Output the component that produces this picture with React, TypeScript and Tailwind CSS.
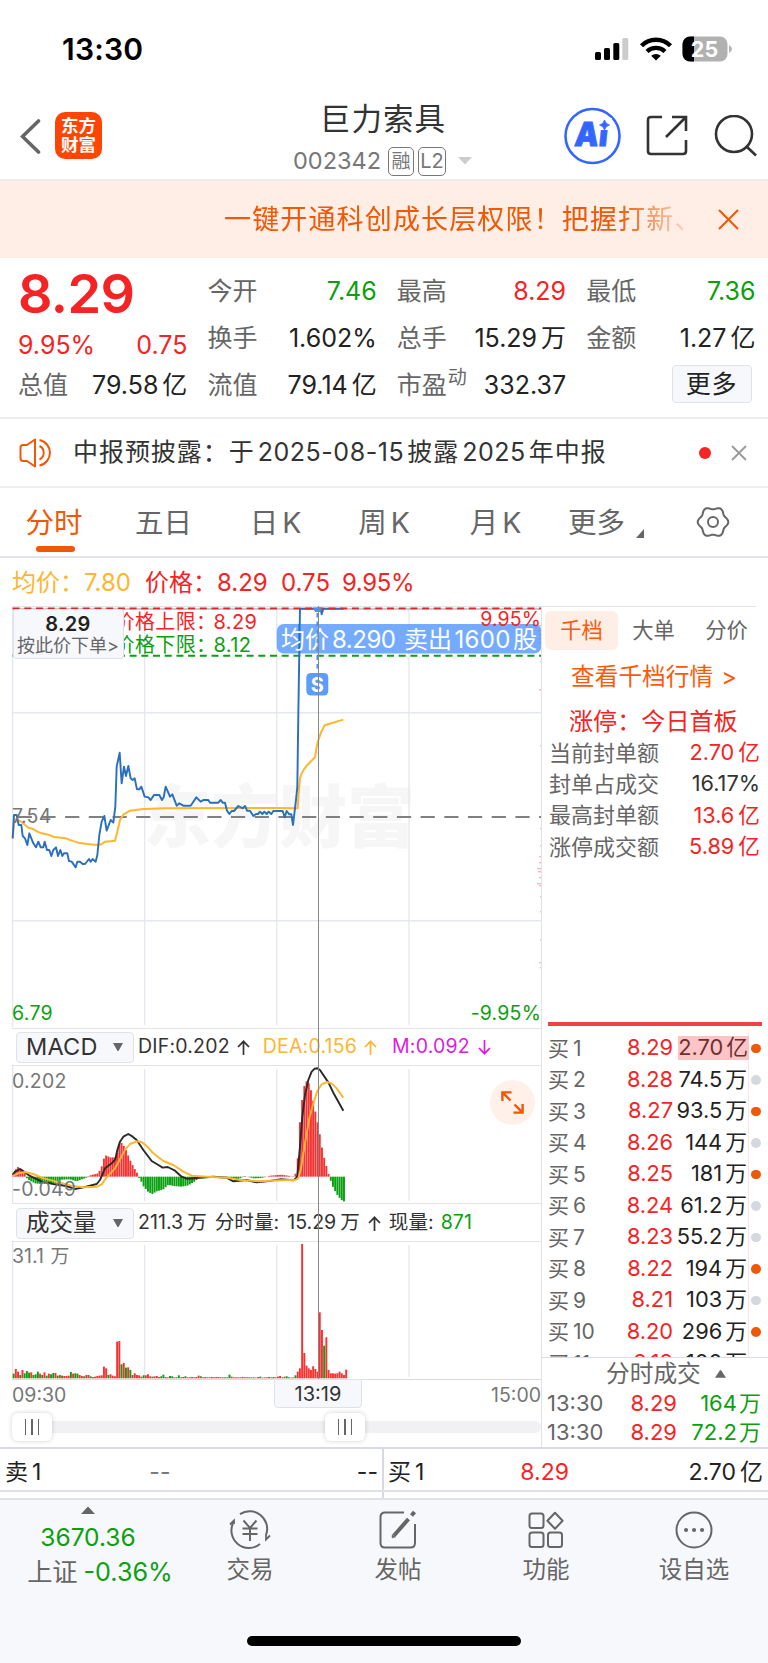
import React from "react";

const UP = "text-[#f52323]";
const DOWN = "text-[#0aa00a]";

// value followed by a chinese unit, with the small gap in between
const Amount = ({ value, unit, gap = "ml-1" }: { value: string; unit?: string; gap?: string }) => (
  <span className="whitespace-nowrap">
    {value}
    {unit && <span className={gap}>{unit}</span>}
  </span>
);

/* ---------- status bar ---------- */

const StatusBar = () => (
  <div className="flex h-[98px] items-center justify-between pl-[62px] pr-[35px]">
    <span className="text-[30px] font-semibold leading-none tracking-[0.2px] text-black">13:30</span>
    <div className="flex items-center gap-[9px]">
      <svg width="36" height="24" viewBox="0 0 36 24">
        <rect x="1" y="15" width="6" height="8" rx="1.6" />
        <rect x="10" y="11" width="6" height="12" rx="1.6" />
        <rect x="19.3" y="6" width="6" height="17" rx="1.6" />
        <rect x="28.3" y="1" width="6" height="22" rx="1.6" fill="#ccc" />
      </svg>
      <svg width="34" height="24" viewBox="0 0 34 24">
        <path d="M2.5 8.8 A 20.5 20.5 0 0 1 31.5 8.8" fill="none" stroke="#000" strokeWidth="4.4" />
        <path d="M8 14.5 A 13 13 0 0 1 26 14.5" fill="none" stroke="#000" strokeWidth="4.2" />
        <path d="M17 23.5 L12.2 18.8 A 7 7 0 0 1 21.8 18.8 Z" />
      </svg>
      <svg width="51" height="26" viewBox="0 0 51 26">
        <defs>
          <clipPath id="battery">
            <rect x="0.5" y="0.5" width="45" height="25" rx="7.5" />
          </clipPath>
        </defs>
        <g clipPath="url(#battery)">
          <rect width="46" height="26" fill="#b1b1b1" />
          <rect width="12" height="26" />
        </g>
        <path d="M47 9 Q50 11 50 13 Q50 15 47 17 Z" fill="#b1b1b1" />
        <text x="22.5" y="20.5" textAnchor="middle" fontSize="21.5" fontWeight="700" fill="#fff">
          25
        </text>
      </svg>
    </div>
  </div>
);

/* ---------- header ---------- */

const Header = () => (
  <div className="relative flex h-[83px] items-start justify-between border-b-2 border-[#ececec] pl-[20px] pr-[10px]">
    <div className="flex items-center gap-[13px] pt-[14px]">
      <svg width="22" height="36" viewBox="0 0 22 36" fill="none" stroke="#666" strokeWidth="3.6">
        <path d="M18.5 3 L2.5 18.5 L18.5 34" strokeLinecap="round" />
      </svg>
      <div className="flex h-[47px] w-[47px] flex-col items-center justify-center rounded-[10px] bg-[#ff4503] text-[17.5px] font-bold leading-[18.5px] text-white">
        <span>东方</span>
        <span>财富</span>
      </div>
    </div>

    <div className="absolute left-[283px] flex w-[200px] flex-col items-center">
      <div className="-mt-px h-[45px] text-[30.5px] leading-[44px] tracking-[1.1px] text-[#333]">巨力索具</div>
      <div className="mt-[1px] flex h-[36px] w-[180px] items-center text-[#777]">
        <span className="w-[95px] text-[23.5px] leading-none">002342</span>
        <span className="flex h-[29px] w-[26px] shrink-0 items-center justify-center rounded-[5px] border-[1.5px] border-[#777] text-[19px] leading-none">
          融
        </span>
        <span className="ml-1 flex h-[29px] w-[28px] shrink-0 items-center justify-center rounded-[5px] border-[1.5px] border-[#777] text-[20px] leading-none">
          L2
        </span>
        <svg className="ml-3 shrink-0" width="14" height="8" viewBox="0 0 14 8">
          <path d="M0 0 H14 L7 7.5 Z" fill="#ccc" />
        </svg>
      </div>
    </div>

    <div className="flex items-center pt-[9px]">
      <svg width="58" height="58" viewBox="0 0 58 58">
        <circle cx="29.5" cy="29" r="27" fill="none" stroke="#3366ff" strokeWidth="2.6" />
        <text
          x="11"
          y="39.5"
          fontSize="33"
          fontWeight="900"
          fill="#3366ff"
          stroke="#3366ff"
          strokeWidth="0.8"
          transform="skewX(-6) translate(4 0)"
          textLength="33"
          lengthAdjust="spacingAndGlyphs"
        >
          Ai
        </text>
        <rect x="35" y="11" width="14" height="12" fill="#fff" />
        <path
          d="M41.5 13 Q42.5 17 46.5 18 Q42.5 19 41.5 23 Q40.5 19 36.5 18 Q40.5 17 41.5 13 Z"
          fill="#3366ff"
          stroke="#3366ff"
          strokeWidth="0.8"
        />
      </svg>
      <svg className="ml-[25px]" width="42" height="42" viewBox="0 0 42 42" fill="none" stroke="#333" strokeWidth="2.6">
        <path d="M16 2 H5 Q2 2 2 5 V36 Q2 39 5 39 H37 Q40 39 40 36 V25" />
        <path d="M26 2 H40 V16 M40 2 L20 22" />
      </svg>
      <svg className="ml-[26px]" width="44" height="42" viewBox="0 0 44 42" fill="none" stroke="#333" strokeWidth="2.6">
        <circle cx="20" cy="19" r="18" />
        <path d="M32 31 L42 40.5" />
      </svg>
    </div>
  </div>
);

const Banner = () => (
  <div className="flex h-[77px] items-center bg-[#ffeee6] pl-[224px]">
    <div className="w-[480px] shrink-0 whitespace-nowrap text-[27px] leading-[40px] tracking-[1.15px] text-[#ee5806] [mask-image:linear-gradient(to_right,#000_82%,transparent_99%)]">
      一键开通科创成长层权限！把握打新、
    </div>
    <svg className="ml-[14px] shrink-0" width="21" height="21" viewBox="0 0 21 21" stroke="#ee5806" strokeWidth="2">
      <path d="M1 1 L20 20 M20 1 L1 20" />
    </svg>
  </div>
);

/* ---------- quote ---------- */

interface Quote {
  label: string;
  value: string;
  unit?: string;
  color?: string;
}

const quotes: Quote[][] = [
  [
    { label: "今开", value: "7.46", color: DOWN },
    { label: "换手", value: "1.602%" },
    { label: "流值", value: "79.14", unit: "亿" },
  ],
  [
    { label: "最高", value: "8.29", color: UP },
    { label: "总手", value: "15.29", unit: "万" },
    { label: "市盈", value: "332.37" },
  ],
  [
    { label: "最低", value: "7.36", color: DOWN },
    { label: "金额", value: "1.27", unit: "亿" },
  ],
];

const QuoteRow = ({ label, value, unit, color }: Quote) => (
  <div className="flex h-[47px] items-center justify-between leading-none">
    <span className="relative text-[#666]">
      {label}
      {label === "市盈" && <sup className="absolute left-[51px] top-[-5px] text-[19px] leading-none">动</sup>}
    </span>
    <span className={color ?? "text-[#222]"}>
      <Amount value={value} unit={unit} />
    </span>
  </div>
);

const QuotePanel = () => (
  <div className="grid h-[161px] grid-cols-4 gap-x-5 border-b-2 border-[#eee] pl-[18px] pr-[12.5px] text-[25px]">
    <div className="flex flex-col">
      <div className="flex h-[69px] items-center pt-[3px] text-[54px] font-semibold leading-none tracking-[-0.6px] text-[#f52323]">
        8.29
      </div>
      <div className="flex h-[36px] items-center justify-between leading-none text-[#f52323]">
        <span>9.95%</span>
        <span>0.75</span>
      </div>
      <div className="flex h-[45px] items-center justify-between leading-none">
        <span className="text-[#666]">总值</span>
        <span className="text-[#222]">
          <Amount value="79.58" unit="亿" />
        </span>
      </div>
    </div>
    {quotes.map((column, i) => (
      <div key={i} className="flex flex-col pt-[10px]">
        {column.map((q) => (
          <QuoteRow key={q.label} {...q} />
        ))}
        {i === 2 && (
          <button className="mr-1 mt-[3px] flex h-[38px] w-[80px] items-center justify-center self-end rounded-[4px] border-[1.5px] border-[#dfe2e8] bg-[#f7f8fb] leading-none tracking-[0.8px] text-[#222]">
            更多
          </button>
        )}
      </div>
    ))}
  </div>
);

const Notice = () => (
  <div className="flex h-[69px] items-center border-b-2 border-[#eee] pl-[19px] pr-5">
    <svg width="34" height="30" viewBox="0 0 34 30" fill="none" stroke="#ee5806" strokeWidth="2">
      <path d="M16 1.5 L8 7 H4 Q1.5 7 1.5 10 V20 Q1.5 23 4 23 H8 L16 28.5 Z" strokeLinejoin="round" />
      <path d="M20.5 2 A 13 13 0 0 1 20.5 27.5" />
      <path d="M20.5 8 A 7.5 7.5 0 0 1 20.5 21.5" />
    </svg>
    <div className="ml-[20px] flex-1 whitespace-nowrap text-[25px] leading-none tracking-[0.95px] text-[#333]">
      中报预披露：于<span className="mx-[3px] tracking-[0.55px]">2025-08-15</span>披露
      <span className="mx-[3px] tracking-[0.55px]">2025</span>年中报
    </div>
    <span className="h-3 w-3 rounded-full bg-[#f52323]" />
    <svg className="ml-[20px] mr-px" width="16" height="16" viewBox="0 0 16 16" stroke="#999" strokeWidth="1.8">
      <path d="M1 1 L15 15 M15 1 L1 15" />
    </svg>
  </div>
);

/* ---------- period tabs ---------- */

// six-lobed outline of the settings icon
const gearPath =
  Array.from({ length: 72 }, (_, i) => {
    const a = (i * Math.PI) / 36;
    const r = 14 + 1.3 * Math.cos(6 * a);
    return `${i ? "L" : "M"}${(17 + r * Math.cos(a)).toFixed(2)} ${(17 + r * Math.sin(a)).toFixed(2)}`;
  }).join(" ") + " Z";

const PeriodTabs = () => (
  <div className="flex h-[70px] items-center border-b-2 border-[#e2e4ea] text-[28.5px] leading-none text-[#666]">
    <div className="relative flex h-full w-[110px] items-center justify-center pr-[2px] pt-[2px] text-[#ee5806]">
      分时
      <span className="absolute bottom-[4px] left-[35.5px] h-[6px] w-[39px] rounded-full bg-[#ee5806]" />
    </div>
    <div className="w-[108px] pr-px pt-[2px] text-center">五日</div>
    <div className="w-[115px] pt-[2px] text-center">
      日<span className="ml-1">K</span>
    </div>
    <div className="w-[102px] pt-[2px] text-center">
      周<span className="ml-1">K</span>
    </div>
    <div className="w-[121px] pt-[2px] text-center">
      月<span className="ml-1">K</span>
    </div>
    <div className="flex w-[110px] pl-[12px] pt-[2px]">
      更多
      <svg className="ml-[11px] mt-[20px] shrink-0" width="8" height="9" viewBox="0 0 8 9">
        <path d="M8 0 V9 H0 Z" fill="#666" />
      </svg>
    </div>
    <svg className="ml-[30px]" width="34" height="34" viewBox="0 0 34 34" fill="none" stroke="#666" strokeWidth="2">
      <path d={gearPath} />
      <circle cx="17" cy="17" r="5" />
    </svg>
  </div>
);

/* ---------- charts ---------- */

const pricePoints =
  "38,835 42,765 50,765 56,795 64,795 68,828 75,835 82,855 88,820 100,850 108,862 115,845 122,862 130,862 134,845 141,870 148,870 154,888 160,870 168,862 174,888 181,870 187,888 192,880 202,880 207,903 215,905 227,922 232,905 240,905 248,912 255,912 267,897 272,905 278,897 287,905 292,885 298,825 305,785 313,768 320,812 332,780 340,788 346,740 350,620 359,578 365,670 372,620 378,648 385,618 392,655 398,660 404,655 411,688 418,688 424,680 434,710 445,712 452,720 462,705 478,705 486,720 491,712 497,680 510,710 517,703 530,737 538,730 550,737 572,737 578,728 589,712 602,725 610,720 625,720 630,728 655,728 662,720 668,728 675,728 681,752 688,762 695,753 702,753 715,738 728,745 735,738 741,752 750,752 760,768 768,762 774,762 780,755 787,762 793,755 800,762 806,755 814,762 820,753 848,753 854,772 860,753 868,763 874,763 879,795 888,720 892,680 895,460 900,146 962,146 965,163 970,146 1030,146";

const averagePoints =
  "38,835 42,790 48,778 60,783 72,792 85,803 98,806 112,815 125,820 145,824 162,831 198,835 215,842 235,848 260,852 295,855 305,852 315,845 345,842 352,815 360,780 370,764 390,752 430,747 500,745 830,744 893,745 896,700 900,655 905,640 914,625 922,615 945,592 950,560 955,540 964,515 974,496 1030,479";

const difPoints =
  "38,555 45,545 60,537 72,545 90,558 105,565 125,575 160,582 200,588 225,597 250,592 290,582 300,570 315,535 335,520 346,508 352,480 360,455 370,440 385,432 398,440 410,450 430,480 455,513 475,525 488,533 503,531 525,542 545,560 560,566 600,563 640,560 680,563 700,574 740,570 770,577 800,574 840,568 880,571 888,565 892,558 900,470 907,380 915,315 925,270 935,245 944,236 952,235 960,240 970,255 985,277 1000,308 1030,362";

const deaPoints =
  "38,558 55,550 75,546 100,552 130,565 170,575 210,586 250,592 290,590 305,583 320,562 345,535 360,508 375,480 390,462 410,454 425,456 440,468 460,490 490,513 520,525 550,545 575,557 620,560 680,563 720,570 780,574 840,571 885,570 895,565 902,540 915,460 928,385 940,340 952,303 965,283 980,276 995,280 1010,295 1030,323";

// [x, height] anchors of the MACD histogram, interpolated minute by minute
const macdAnchors = [
  [38, 5], [52, 30], [62, 24], [76, 8], [80, -4], [90, -12], [105, -20], [125, -22], [170, -18], [185, -9],
  [210, -8], [230, -14], [245, -8], [262, -2], [267, 3], [295, 10], [305, 30], [315, 65], [330, 58], [345, 58],
  [352, 72], [360, 105], [368, 98], [378, 80], [390, 50], [400, 30], [411, 12], [415, 0], [422, -10], [430, -28],
  [445, -46], [457, -52], [470, -44], [490, -38], [505, -24], [520, -28], [545, -30], [565, -26], [585, -14],
  [600, 0], [680, -1], [700, -6], [715, -8], [735, 2], [760, -5], [785, -4], [800, 0], [810, 3], [845, 6],
  [870, 2], [885, -3], [894, 60], [900, 165], [908, 245], [915, 282], [922, 288], [928, 277], [935, 252],
  [942, 215], [949, 182], [956, 147], [962, 112], [968, 75], [975, 47], [982, 22], [988, 0], [994, -17],
  [1000, -33], [1007, -46], [1013, -56], [1020, -65], [1027, -72], [1034, -75],
];

const STEP = 6.607;

const macdBars = Array.from({ length: 151 }, (_, i) => {
  const x = 38 + i * STEP;
  const mid = x + 3;
  const n = Math.max(1, macdAnchors.findIndex(([ax]) => ax >= mid));
  const [x0, y0] = macdAnchors[n - 1];
  const [x1, y1] = macdAnchors[n];
  return { x, h: y0 + ((y1 - y0) * (mid - x0)) / (x1 - x0) };
});

// negative = falling minute (green)
const volumes = [
  -14, 28, 20, -10, 25, -15, -22, -17, 18, -10, -12, -20, 14, -10, 18, -8, 14, -12, -16, 16, -8, 10, -8, 7, 7, 8,
  -19, 14, -15, -14, 10, 7, -6, 10, 10, -6, 4, 5, 7, 8, 9, 35, 30, -10, 12, 8, 6, 110, 112, -42, 46, -32, 33, -25,
  10, 15, 10, 9, 5, -9, 9, 12, 6, -5, 6, 7, 4, -6, -11, 4, 3, -7, -6, 3, -3, -9, 3, 4, -6, 3, 3, 4, 3, 4, 8, -6,
  3, 4, 3, 3, 4, 3, 4, 4, 3, 3, -3, 3, -11, 5, 3, 3, 3, 3, 4, 3, 3, -3, 3, -3, 2, 4, -5, 2, 3, 3, -4, 3, -4, 3,
  5, 7, -3, 5, -6, -3, 2, 3, -9, 20, 30, 403, 76, 38, 30, 25, 36, 28, 20, 198, 145, -98, 123, 25, 15, 15, 14, 15,
  20, 15, 10, 26,
];

const RED = "#f83232";
const GREEN = "#0aa010";

const GridColumns = ({ height }: { height: number }) => (
  <g stroke="#e4e7ef" strokeWidth="1.3">
    <path d={`M12.6 0 V${height}`} />
    <path d={`M144.7 3 V${height - 2} M276.8 3 V${height - 2} M409 3 V${height - 2}`} />
  </g>
);

// small ticks of the price distribution along the right edge
const priceTicks = [
  [625, 2], [630, 3], [634, 2], [638, 3], [642, 2], [661, 1], [689, 2], [745, 1], [828, 1], [845, 1], [856, 2],
  [862, 2], [868, 4], [871, 3], [877, 2], [883, 4], [885, 2], [896, 1], [911, 1], [939, 1], [962, 2], [967, 1],
];

const PriceChart = () => (
  <div className="relative h-[422px] shrink-0">
    <svg className="block" width="541" height="422" viewBox="0 0 541 422">
      <text x="143" y="236" fontSize="68" fontWeight="900" fill="#f6f6f6">
        东方财富
      </text>
      <path d="M12 0.6 H541" stroke="#e0e3ea" strokeWidth="1.2" />
      <GridColumns height={421} />
      <path d="M12.6 106.7 H541 M12.6 314.7 H541" stroke="#e4e7ef" strokeWidth="1.5" />
      <path d="M17.7 211 H541" stroke="#808080" strokeWidth="2.2" strokeDasharray="14.2 9.5" />
      <path d="M12.6 3 H541" stroke="#777" strokeWidth="0.8" />
      <path d="M12.6 49.7 H541" stroke={GREEN} strokeWidth="2" strokeDasharray="7 4.7" />

      <g transform="translate(0 -46) scale(0.33333)" fill="none" strokeLinejoin="round">
        <polyline points={averagePoints} stroke="#fdb62f" strokeWidth="6" />
        <polyline points={pricePoints} stroke="#2b6fc0" strokeWidth="5.8" />
      </g>
      <path d="M12.6 2.3 H541" stroke="#e2232a" strokeWidth="1.8" strokeDasharray="7 4.7" />
      <g fill="#fcb9bd">
        {priceTicks.map(([y, w]) => (
          <rect key={y} x={541 - w} y={y - 606} width={w} height="1.4" />
        ))}
      </g>

      <text x="12" y="217" fontSize="19.5" letterSpacing="0.3" fill="#777">
        7.54
      </text>
      <text x="12" y="414" fontSize="19.5" letterSpacing="0.3" fill={GREEN}>
        6.79
      </text>
      <text x="541" y="414" fontSize="19.5" textAnchor="end" letterSpacing="0.2" fill={GREEN}>
        -9.95%
      </text>
      <g fontSize="20" letterSpacing="0.4">
        <text x="114.5" y="22.5" fill="#f52323">
          价格上限：
        </text>
        <text x="213.5" y="22.5" fill="#f52323">
          8.29
        </text>
        <text x="114.5" y="46" fill={GREEN}>
          价格下限：
        </text>
        <text x="213.5" y="46" fill={GREEN}>
          8.12
        </text>
      </g>

      <rect x="276.8" y="18" width="264.5" height="29.5" rx="7" fill="#4a90ff" fillOpacity="0.76" />
      <path d="M299.4 18 V47.5" stroke="#2b6fc0" strokeWidth="1.8" />
      <text x="541" y="19.5" fontSize="19.5" textAnchor="end" letterSpacing="0.1" fill="#f52323">
        9.95%
      </text>
      <g fontSize="24" fill="#fff">
        <text x="281" y="41.5" textLength="48">
          均价
        </text>
        <text x="332" y="41.5" textLength="64">
          8.290
        </text>
        <text x="404" y="41.5" textLength="48">
          卖出
        </text>
        <text x="454.5" y="41.5" textLength="56">
          1600
        </text>
        <text x="513" y="41.5">
          股
        </text>
      </g>

      <path d="M313 1.5 H322 L320 6 H315 Z" fill="#4a90f0" />
      <path d="M317.5 7 V66" stroke="#4a90f0" strokeWidth="2" strokeDasharray="4.5 4" />
      <rect x="306.3" y="67" width="22" height="22.5" rx="4.5" fill="#5b9df9" />
      <text x="317.3" y="85.5" fontSize="20" fontWeight="700" textAnchor="middle" fill="#fff">
        S
      </text>
    </svg>

    <div className="absolute left-[12.5px] top-[3px] flex h-[50px] w-[111px] flex-col items-center justify-center rounded-[3px] border border-[#dfe2e8] bg-[#f7f8fb]">
      <span className="text-[20px] font-semibold leading-[22px] tracking-[0.4px] text-[#222]">8.29</span>
      <span className="whitespace-nowrap text-[18px] leading-[21px] text-[#666]">按此价下单&gt;</span>
    </div>
  </div>
);

const IndicatorButton = ({ children }: { children: React.ReactNode }) => (
  <div className="ml-4 flex h-[31px] w-[118px] shrink-0 items-center justify-between rounded-[4px] border-[1.5px] border-[#dfe2e8] bg-[#f7f8fb] pl-[9px] pr-[10px] text-[23.5px] leading-none text-[#333]">
    {children}
    <svg width="10" height="8" viewBox="0 0 10 8">
      <path d="M0 0 H10 L5.5 8 H4.5 Z" fill="#666" />
    </svg>
  </div>
);

// thin up / down arrow behind an indicator value
const Arrow = ({ down = false }: { down?: boolean }) => (
  <svg
    className={down ? "rotate-180" : ""}
    width="13"
    height="15"
    viewBox="0 0 13 15"
    fill="none"
    stroke="currentColor"
    strokeWidth="1.7"
  >
    <path d="M6.5 15 V1.5 M1 7 L6.5 1.3 L12 7" />
  </svg>
);

const MacdChart = () => (
  <div className="relative h-[137px] shrink-0">
    <svg className="block" width="541" height="137" viewBox="0 0 541 137">
      <GridColumns height={137} />
      <g transform="translate(0 -76) scale(0.33333)">
        {macdBars.map(({ x, h }) => (
          <rect
            key={x}
            x={x}
            y={h > 0 ? 560 - h : 560}
            width="5.8"
            height={Math.abs(h)}
            fill={h > 0 ? RED : GREEN}
          />
        ))}
        <g fill="none" strokeWidth="5.8" strokeLinejoin="round">
          <polyline points={difPoints} stroke="#2a2a2a" />
          <polyline points={deaPoints} stroke="#fdb62f" />
        </g>
      </g>
      <g fontSize="19.5" letterSpacing="0.2" fill="#777">
        <text x="12" y="21.5">
          0.202
        </text>
        <text x="12" y="130">
          -0.049
        </text>
      </g>
    </svg>
    <div className="absolute right-[6px] top-[14px] flex h-[45px] w-[45px] items-center justify-center rounded-full bg-[#fff1ea]">
      <svg width="23" height="23" viewBox="0 0 23 23" fill="none" stroke="#ee5806" strokeWidth="2.4">
        <path d="M1.4 10 V1.4 H10.5 M1.4 1.4 L9.5 9.5" />
        <path d="M21.6 13 V21.6 H12.5 M21.6 21.6 L13.5 13.5" />
      </svg>
    </div>
  </div>
);

const VolumeChart = () => (
  <svg className="block shrink-0" width="541" height="137" viewBox="0 0 541 137">
    <GridColumns height={137} />
    <g transform="translate(0 136.3) scale(0.33333)">
      {volumes.map((v, i) => (
        <rect
          key={i}
          x={38 + i * STEP}
          y={-Math.abs(v)}
          width="5.8"
          height={Math.abs(v)}
          fill={v > 0 ? RED : GREEN}
        />
      ))}
    </g>
    <text x="12" y="21" fontSize="19.5" fill="#777">
      31.1
    </text>
    <text x="50.5" y="21" fontSize="19" fill="#777">
      万
    </text>
  </svg>
);

const SliderHandle = ({ className }: { className: string }) => (
  <div
    className={`absolute top-0 flex h-[28px] w-[40px] items-center justify-center gap-[5px] rounded-[6px] bg-white shadow-[0_0_5px_rgba(0,0,0,0.18)] ${className}`}
  >
    <span className="h-4 w-[1.6px] bg-[#666]" />
    <span className="h-4 w-[1.6px] bg-[#666]" />
    <span className="h-4 w-[1.6px] bg-[#666]" />
  </div>
);

const ChartColumn = () => (
  <div className="relative flex w-[542px] shrink-0 flex-col border-r border-[#dfe2e8]">
    <PriceChart />
    <div className="ml-3 flex h-[38px] shrink-0 items-center border-y-[1.5px] border-[#e2e4ea]">
      <div className="-ml-3 flex items-center text-[19.5px] leading-none tracking-[0.2px]">
        <IndicatorButton>MACD</IndicatorButton>
        <span className="ml-[4px] flex items-center gap-[7px] text-[#333]">
          DIF:0.202 <Arrow />
        </span>
        <span className="ml-[13px] flex items-center gap-[7px] text-[#fdb62f]">
          DEA:0.156 <Arrow />
        </span>
        <span className="ml-[15px] flex items-center gap-[8px] text-[#e01ae0]">
          M:0.092 <Arrow down />
        </span>
      </div>
    </div>
    <MacdChart />
    <div className="ml-3 flex h-[39px] shrink-0 items-center border-y-[1.5px] border-[#e2e4ea] pt-px">
      <div className="-ml-3 flex items-center whitespace-nowrap text-[19.6px] leading-none text-[#333]">
        <IndicatorButton>成交量</IndicatorButton>
        <span className="ml-[4px]">
          <Amount value="211.3" unit="万" />
        </span>
        <span className="ml-2">分时量:</span>
        <span className="ml-2">
          <Amount value="15.29" unit="万" />
        </span>
        <span className="mx-2">
          <Arrow />
        </span>
        现量:
        <span className="ml-[7px] text-[#0aa010]">871</span>
      </div>
    </div>
    <VolumeChart />
    <div className="ml-3 flex h-[35px] shrink-0 justify-between border-t-[1.5px] border-[#d9dce3] pt-[3.5px] text-[19.5px] leading-[22px] text-[#777]">
      <span>09:30</span>
      <span>15:00</span>
    </div>
    <div className="relative -mt-px ml-3 h-[33px]">
      <div className="mt-[8px] h-[12px] rounded-r-full bg-[#f1f1f4]" />
      <SliderHandle className="left-0" />
      <SliderHandle className="left-[313px]" />
    </div>

    {/* crosshair with its time label */}
    <span className="absolute left-[318px] top-0 h-[773px] w-px bg-[#888]" />
    <span className="absolute left-[274px] top-[773px] flex h-[29px] w-[88px] items-center justify-center rounded-b-[4px] border-[1.5px] border-[#dfe2e8] bg-[#f7f8fb] text-[20px] leading-none text-[#333]">
      13:19
    </span>
  </div>
);

/* ---------- order book ---------- */

const sealed = [
  { label: "当前封单额", value: "2.70", unit: "亿", color: UP },
  { label: "封单占成交", value: "16.17%", unit: "", color: "text-[#333]" },
  { label: "最高封单额", value: "13.6", unit: "亿", color: UP },
  { label: "涨停成交额", value: "5.89", unit: "亿", color: UP },
];

const bids = [
  { price: "8.29", qty: "2.70", unit: "亿", hot: true },
  { price: "8.28", qty: "74.5", unit: "万", hot: false },
  { price: "8.27", qty: "93.5", unit: "万", hot: true },
  { price: "8.26", qty: "144", unit: "万", hot: false },
  { price: "8.25", qty: "181", unit: "万", hot: true },
  { price: "8.24", qty: "61.2", unit: "万", hot: false },
  { price: "8.23", qty: "55.2", unit: "万", hot: false },
  { price: "8.22", qty: "194", unit: "万", hot: true },
  { price: "8.21", qty: "103", unit: "万", hot: false },
  { price: "8.20", qty: "296", unit: "万", hot: true },
  { price: "8.19", qty: "100", unit: "万", hot: false },
];

const trades = [
  { time: "13:30", price: "8.29", qty: "164" },
  { time: "13:30", price: "8.29", qty: "72.2" },
];

const OrderColumn = () => (
  <div className="flex flex-1 flex-col overflow-hidden">
    <div className="mr-3 flex h-[45px] shrink-0 border-t border-[#e2e4ea] pl-[3px] pt-1 text-[21.3px] leading-none text-[#666]">
      <span className="flex h-[39px] w-[73px] shrink-0 items-center justify-center rounded-[6px] bg-[#ffeee6] text-[#fb5a08]">
        千档
      </span>
      <span className="flex h-[39px] w-[71px] shrink-0 items-center justify-center">大单</span>
      <span className="flex h-[39px] w-[75px] shrink-0 items-center justify-center">分价</span>
    </div>
    <div className="flex h-[51px] shrink-0 items-center pl-[29px] text-[23.7px] leading-none text-[#fb5a08]">
      查看千档行情<span className="ml-2">&gt;</span>
    </div>
    <div className="flex h-[35px] shrink-0 items-center whitespace-nowrap pl-[27px] pt-[5px] text-[24.1px] leading-none text-[#f52323]">
      涨停：今日首板
    </div>
    <div className="pl-[7px] pr-[8px] text-[22px]">
      {sealed.map((row) => (
        <div key={row.label} className="flex h-[31.4px] items-center justify-between leading-none">
          <span className="text-[#666]">{row.label}</span>
          <span className={`text-[21.7px] ${row.color}`}>
            <Amount value={row.value} unit={row.unit} />
          </span>
        </div>
      ))}
    </div>
    <div className="ml-[5.5px] mr-[6px] mt-[159px] h-[4px] shrink-0 bg-[#ee4245]" />

    <div className="mt-[7px] h-[324px] shrink-0 overflow-hidden pl-[6px] text-[21.8px]">
      {bids.map((bid, i) => (
        <div key={bid.price} className="flex h-[31.5px] items-center leading-none">
          <span className="w-[60px] shrink-0 text-[21px] text-[#666]">
            <Amount value="买" unit={String(i + 1)} />
          </span>
          <span className="w-[65px] shrink-0 text-right text-[#f52323]">{bid.price}</span>
          <span className="flex h-full w-[76px] shrink-0 items-center justify-end border-r border-[#fde3e3] text-[#222]">
            <span className={i === 0 ? "-mr-px bg-[#fdc4c5] py-[1px] pr-px text-[#6b3030]" : "pr-px"}>
              <Amount value={bid.qty} unit={bid.unit} gap="ml-[3px]" />
            </span>
          </span>
          <span
            className={`ml-[2px] h-[9.5px] w-[9.5px] rounded-full ${bid.hot ? "bg-[#ee5806]" : "bg-[#d5d8de]"}`}
          />
        </div>
      ))}
    </div>

    <div className="flex h-[33px] shrink-0 items-center border-t-[1.5px] border-[#d9dce3] pl-[64px] text-[23.7px] leading-none text-[#666]">
      分时成交
      <svg className="ml-[14px]" width="11" height="8" viewBox="0 0 10 7">
        <path d="M0 7 H10 L5.5 0 H4.5 Z" fill="#666" />
      </svg>
    </div>
    {trades.map((t) => (
      <div key={t.qty} className="-mt-px mb-px flex h-[29px] shrink-0 items-center pl-[5px] text-[22px] leading-none">
        <span className="w-[64px] text-[#666]">{t.time}</span>
        <span className="w-[66px] text-right text-[#f52323]">{t.price}</span>
        <span className="w-[84px] text-right text-[#0aa010]">
          <Amount value={t.qty} unit="万" gap="ml-[2px]" />
        </span>
      </div>
    ))}
  </div>
);

/* ---------- bottom ---------- */

const BestPrices = () => (
  <div className="flex h-[51px] flex-col border-t-2 border-[#d7dae0] text-[23px] leading-none text-[#222]">
    <div className="flex h-[43px] border-b-2 border-[#dfe1e6]">
      <div className="flex w-[382px] items-center pl-[5px] pr-1 pt-[5px]">
        <Amount value="卖" unit="1" />
        <span className="ml-[108px] flex-1 text-[#777]">--</span>
        <span>--</span>
      </div>
      <div className="flex flex-1 items-center border-l-2 border-[#d7dae0] pl-1 pr-[5px] pt-[5px]">
        <Amount value="买" unit="1" />
        <span className="ml-[96px] flex-1 text-[#f52323]">8.29</span>
        <Amount value="2.70" unit="亿" />
      </div>
    </div>
    <div className="ml-[382px] flex-1 border-l-2 border-[#d7dae0]" />
  </div>
);

const navItems = [
  {
    label: "交易",
    icon: (
      <>
        <path d="M11 4.2 A 17.5 17.5 0 0 1 37.2 24.5 M31 34 A 17.5 17.5 0 0 1 4.6 12" />
        <path d="M1 14.5 L5 10.5 V14 M41 25.5 L37 29.5 V24" strokeWidth="1.8" />
        <path d="M14.5 10.5 L21 18 L27.5 10.5 M13.5 18.5 H28.5 M13.5 24 H28.5 M21 18 V31" />
      </>
    ),
  },
  {
    label: "发帖",
    icon: (
      <>
        <path d="M27 2.5 H8 Q3.5 2.5 3.5 7 V33 Q3.5 37.5 8 37.5 H33.5 Q38 37.5 38 33 V14" />
        <path d="M17 25.5 L31.5 9 M34.5 5.5 L37.5 2" strokeWidth="4" />
        <path d="M15.2 24.5 L15 28 L18.5 27 Z" fill="currentColor" strokeWidth="0.5" />
      </>
    ),
  },
  {
    label: "功能",
    icon: (
      <>
        <rect x="4.5" y="3.5" width="14" height="14.5" rx="2.5" />
        <rect x="4.5" y="22.5" width="14" height="14.5" rx="2.5" />
        <rect x="23" y="22.5" width="14" height="14.5" rx="2.5" />
        <path d="M30 2.8 L37.6 10.8 L30 18.8 L22.4 10.8 Z" strokeLinejoin="round" />
      </>
    ),
  },
  {
    label: "设自选",
    icon: (
      <>
        <circle cx="21" cy="20" r="17.5" />
        <path d="M13 20 H13.1 M21 20 H21.1 M29 20 H29.1" strokeWidth="4" strokeLinecap="round" />
      </>
    ),
  },
];

const BottomNav = () => (
  <div className="flex h-[165px] flex-col border-t-2 border-[#dfe1e6] bg-[#f7f8fb]">
    <div className="flex h-[97px]">
      <div className="flex w-[176px] flex-col items-center pt-[7px] leading-none">
        <svg width="14" height="7" viewBox="0 0 14 7">
          <path d="M0 7 H14 L7.5 0 H6.5 Z" fill="#666" />
        </svg>
        <span className="mt-[10px] h-[26px] text-[24.5px] leading-[26px] text-[#0aa010]">3670.36</span>
        <span className="ml-6 mt-[8px] whitespace-nowrap text-[25.2px] leading-[28px] text-[#666]">
          上证<span className="ml-[6px] text-[#0aa010]">-0.36%</span>
        </span>
      </div>
      {navItems.map((item) => (
        <div key={item.label} className="flex w-[148px] flex-col items-center pt-[10px] text-[#666]">
          <svg width="42" height="40" viewBox="0 0 42 40" fill="none" stroke="currentColor" strokeWidth="2">
            {item.icon}
          </svg>
          <span className="mt-[6px] text-[23.5px] leading-[28px]">{item.label}</span>
        </div>
      ))}
    </div>
    <div className="mx-auto mt-[39px] h-[10px] w-[274px] rounded-full bg-black" />
  </div>
);

const App: React.FC = () => {
  return (
    <div className="h-[1663px] w-[768px] overflow-hidden bg-white font-['Inter','Noto_Sans_CJK_SC',sans-serif]">
      <StatusBar />
      <Header />
      <Banner />
      <QuotePanel />
      <Notice />
      <PeriodTabs />
      <div className="flex h-[48px] items-center whitespace-nowrap pl-3 pt-[2px] text-[24px] leading-none">
        <span className="text-[#fdb62f]">均价：</span>
        <span className="w-[61px] text-[#fdb62f]">7.80</span>
        <span className={UP}>价格：</span>
        <span className={`w-[64px] ${UP}`}>8.29</span>
        <span className={`w-[61px] ${UP}`}>0.75</span>
        <span className={`tracking-[-0.4px] ${UP}`}>9.95%</span>
      </div>
      <div className="flex h-[841px]">
        <ChartColumn />
        <OrderColumn />
      </div>
      <BestPrices />
      <BottomNav />
    </div>
  );
};

export default App;
